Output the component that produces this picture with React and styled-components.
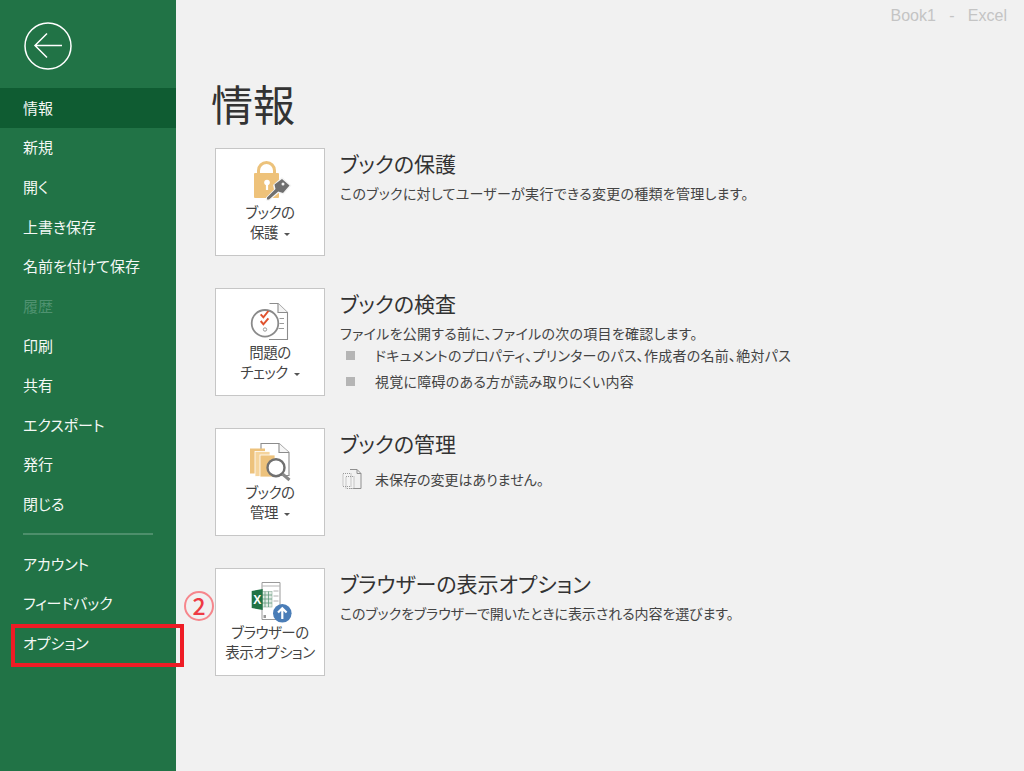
import React from 'react';
import styled, { createGlobalStyle } from 'styled-components';

const FONT = `"Noto Sans CJK JP", "Liberation Sans", sans-serif`;

const Global = createGlobalStyle`
  html, body { margin: 0; padding: 0; background: #f1f1f1; }
  body { font-family: ${FONT}; font-feature-settings: "palt"; }
`;

const Page = styled.div`
  position: relative;
  display: flex;
  width: 1024px;
  height: 771px;
  overflow: hidden;
  background: #f1f1f1;
`;
const Sidebar = styled.nav`
  width: 176px;
  flex: none;
  background: #217346;
  display: flex;
  flex-direction: column;
  padding-top: 22px;
  box-sizing: border-box;
`;
const BackButton = styled.div`
  height: 66px;
  padding-left: 24px;
  box-sizing: border-box;
`;
const NavItem = styled.div`
  height: 39.64px;
  flex: none;
  box-sizing: border-box;
  padding: 0 0 1px 23px;
  display: flex;
  align-items: center;
  font-size: 15px;
  letter-spacing: -0.05px;
  color: ${p => (p.$disabled ? '#4f9270' : '#f4f8f5')};
  background: ${p => (p.$active ? '#0f5c32' : 'transparent')};
`;
const Divider = styled.div`
  height: 2px;
  width: 130px;
  margin: 9px 0 9px 23px;
  background: #4d8f6b;
`;
const Main = styled.main`
  flex: 1;
  display: flex;
  flex-direction: column;
  padding: 0 0 0 39px;
  min-width: 0;
`;
const AppTitle = styled.div`
  align-self: flex-end;
  margin: 6px 17px 0 0;
  height: 20px;
  line-height: 20px;
  font-family: "Liberation Sans", sans-serif;
  font-size: 16px;
  color: #c4c4c4;
  white-space: pre;
`;
const PageTitle = styled.h1`
  margin: 46px 0 2px -4px;
  height: 62px;
  line-height: 62px;
  font-size: 42px;
  font-weight: 400;
  color: #333;
`;
const Sections = styled.div`
  display: flex;
  flex-direction: column;
  gap: 32px;
  margin-top: 12px;
`;
const Section = styled.section`
  display: flex;
  gap: 15px;
`;
const ActionButton = styled.div`
  width: 110px;
  height: 108px;
  box-sizing: border-box;
  flex: none;
  background: #fff;
  border: 1px solid #c6c6c6;
  display: flex;
  flex-direction: column;
  align-items: center;
  padding-top: 12px;
`;
const IconSlot = styled.div`
  height: 40px;
  width: 56px;
  flex: none;
`;
const ButtonLabel = styled.div`
  margin-top: 1px;
  font-size: 14.5px;
  letter-spacing: -0.5px;
  line-height: 20px;
  color: #444;
  text-align: center;
  white-space: nowrap;
`;
const Caret = styled.span`
  display: inline-block;
  width: 0;
  height: 0;
  margin-left: 6px;
  vertical-align: middle;
  border-left: 3px solid transparent;
  border-right: 3px solid transparent;
  border-top: 3px solid #555;
`;
const Info = styled.div`
  display: flex;
  flex-direction: column;
  min-width: 0;
`;
const SectionTitle = styled.h2`
  margin: 0;
  height: 34px;
  line-height: 30px;
  font-size: 21px;
  font-weight: 400;
  color: #333;
  white-space: nowrap;
`;
const Text = styled.p`
  margin: 0;
  height: 20px;
  line-height: 22px;
  font-size: 14px;
  letter-spacing: ${p => (p.$tight ? '-0.08px' : '0.27px')};
  color: #444;
  white-space: nowrap;
`;
const Bullet = styled.div`
  display: flex;
  align-items: center;
  height: 26px;
  font-size: 14px;
  letter-spacing: 0.25px;
  color: #444;
  white-space: nowrap;
  padding-left: 6px;
  &::before {
    content: '';
    width: 9px;
    height: 9px;
    background: #b5b5b5;
    margin-right: 20px;
    flex: none;
  }
`;
const StatusRow = styled.div`
  display: flex;
  align-items: center;
  gap: 12px;
  height: 34px;
  margin-left: 1px;
  font-size: 14px;
  color: #444;
`;
const RedBox = styled.div`
  position: absolute;
  left: 11px;
  top: 624px;
  width: 173px;
  height: 43px;
  box-sizing: border-box;
  border: 4px solid #ee1c25;
`;
const Annotation = styled.div`
  position: absolute;
  left: 184px;
  top: 591px;
  width: 30px;
  height: 30px;
  box-sizing: border-box;
  border: 2px solid #f6868c;
  border-radius: 50%;
  color: #ee3a44;
  font-size: 23px;
  font-weight: 500;
  line-height: 25px;
  text-align: center;
`;

const ArrowIcon = () => (
  <svg width="48" height="48" viewBox="0 0 48 48" fill="none" stroke="#fff">
    <circle cx="24" cy="24" r="23" strokeWidth="1.5" />
    <path d="M38 23.500H11M23 11.500L11 23.500L23 35.500" strokeWidth="1.5" />
  </svg>
);
const LockIcon = () => (
  <svg width="56" height="42" viewBox="0 0 56 42" fill="none">
    <path d="M16.500 13V9.500a8 8 0 0 1 16 0V13" stroke="#ecc27b" strokeWidth="3" />
    <rect x="12" y="12" width="25" height="25" rx="1" fill="#eec27a" />
    <circle cx="25" cy="21.500" r="2.800" fill="#fff" />
    <rect x="23.900" y="22" width="2.200" height="7" fill="#fff" />
    <path d="M40 16l9.500 8.500-8 9-5-1.500-9.500 8-3-.5v-3l8-8-1-4.500z" fill="#f4f4f4" />
    <path d="M40 18l7.500 6.500-6.500 7.500-4.800-1.500-9.200 8h-2v-2l8.500-8.500-1-4.500z" fill="#6f6f6f" />
    <circle cx="41" cy="23" r="1.500" fill="#f4f4f4" />
  </svg>
);
const CheckIcon = () => (
  <svg width="56" height="42" viewBox="0 0 56 42" fill="none">
    <path d="M27.500 2.500H36l9.500 9v27H27" stroke="#8c8c8c" strokeWidth="1.100" fill="#fff" />
    <path d="M36 2.500v9h9.500" stroke="#8c8c8c" strokeWidth="1.100" fill="#f4f4f4" />
    <path d="M37.500 17.500H42M37.500 22.500H42M36.500 27.500H42" stroke="#9a9a9a" strokeWidth="1" />
    <circle cx="23" cy="22.300" r="13.300" stroke="#8a8a8a" strokeWidth="1.800" fill="#fff" />
    <path d="M18.700 13.300l2.700 3 5-6.300M18.700 20l2.700 3.300 5-6" stroke="#e0522e" strokeWidth="2" />
    <circle cx="23" cy="28.500" r="1.700" stroke="#999" strokeWidth="1" />
  </svg>
);
const ManageIcon = () => (
  <svg width="56" height="42" viewBox="0 0 56 42" fill="none">
    <path d="M19 2.500h18l10 9v23H19z" stroke="#8c8c8c" strokeWidth="1.100" fill="#fff" />
    <path d="M37 2.500v9h10" stroke="#8c8c8c" strokeWidth="1.100" fill="#f6f6f6" />
    <rect x="8" y="7.500" width="15" height="25" fill="#edc27c" />
    <rect x="13" y="10.500" width="15" height="25" fill="#f5d49c" stroke="#fff" strokeWidth=".8" />
    <rect x="18" y="14" width="15" height="22" fill="#edc27c" stroke="#fff" strokeWidth=".8" />
    <circle cx="34" cy="26.700" r="8.500" fill="#fff" stroke="#707070" strokeWidth="2.400" />
    <path d="M40.500 33l7 6" stroke="#8a8a8a" strokeWidth="3" />
  </svg>
);
const BrowserIcon = () => (
  <svg width="56" height="42" viewBox="0 0 56 42" fill="none">
    <path d="M20 1.500h18v37H20z" stroke="#9a9a9a" strokeWidth="1" fill="#fff" />
    <path d="M20 5h18" stroke="#b5b5b5" />
    <path d="M31.500 10h5M31.500 15h5M31.500 20h5" stroke="#b0b0b0" />
    <rect x="21.500" y="34" width="2.500" height="3" fill="#999" />
    <rect x="20" y="10.500" width="10" height="15.500" fill="#e2ece5" stroke="#9bb8a6" strokeWidth=".7" />
    <path d="M23 10.500V26M26.500 10.500V26M20 14h10M20 18h10M20 22h10" stroke="#5f9a7c" strokeWidth=".8" />
    <path d="M9.700 10l11-2v21l-11-2z" fill="#217346" />
    <text x="15.200" y="23" fontFamily="Liberation Sans" fontSize="12" fontWeight="700" fill="#fff" textAnchor="middle">X</text>
    <circle cx="40.300" cy="32.300" r="9.300" fill="#4a7db7" />
    <path d="M40.300 38V27.500M36 31.500l4.300-4.300 4.300 4.300" stroke="#fff" strokeWidth="2.200" />
  </svg>
);
const SmallFilesIcon = () => (
  <svg width="22" height="22" viewBox="0 0 22 22" fill="none">
    <path d="M9 1.500h7l4 4v15H9" stroke="#8f8f8f" />
    <path d="M16 1.500v4h4" stroke="#8f8f8f" />
    <path d="M2 5.500h8v13H2zM5 8.500h8v12H5z" stroke="#9a9a9a" strokeDasharray="1 1" fill="#f4f4f4" />
  </svg>
);

const navTop = ['情報', '新規', '開く', '上書き保存', '名前を付けて保存', '履歴', '印刷', '共有', 'エクスポート', '発行', '閉じる'];
const navBottom = ['アカウント', 'フィードバック', 'オプション'];

export default function App() {
  return (
    <Page>
      <Global />
      <Sidebar>
        <BackButton><ArrowIcon /></BackButton>
        {navTop.map(t => (
          <NavItem key={t} $active={t === '情報'} $disabled={t === '履歴'}>{t}</NavItem>
        ))}
        <Divider />
        {navBottom.map(t => <NavItem key={t}>{t}</NavItem>)}
      </Sidebar>
      <Main>
        <AppTitle>Book1   -   Excel</AppTitle>
        <PageTitle>情報</PageTitle>
        <Sections>
          <Section>
            <ActionButton>
              <IconSlot><LockIcon /></IconSlot>
              <ButtonLabel>ブックの<br />保護<Caret /></ButtonLabel>
            </ActionButton>
            <Info>
              <SectionTitle>ブックの保護</SectionTitle>
              <Text>このブックに対してユーザーが実行できる変更の種類を管理します。</Text>
            </Info>
          </Section>
          <Section>
            <ActionButton>
              <IconSlot><CheckIcon /></IconSlot>
              <ButtonLabel>問題の<br />チェック<Caret /></ButtonLabel>
            </ActionButton>
            <Info>
              <SectionTitle>ブックの検査</SectionTitle>
              <Text>ファイルを公開する前に、ファイルの次の項目を確認します。</Text>
              <Bullet>ドキュメントのプロパティ、プリンターのパス、作成者の名前、絶対パス</Bullet>
              <Bullet>視覚に障碍のある方が読み取りにくい内容</Bullet>
            </Info>
          </Section>
          <Section>
            <ActionButton>
              <IconSlot><ManageIcon /></IconSlot>
              <ButtonLabel>ブックの<br />管理<Caret /></ButtonLabel>
            </ActionButton>
            <Info>
              <SectionTitle>ブックの管理</SectionTitle>
              <StatusRow><SmallFilesIcon />未保存の変更はありません。</StatusRow>
            </Info>
          </Section>
          <Section>
            <ActionButton>
              <IconSlot><BrowserIcon /></IconSlot>
              <ButtonLabel>ブラウザーの<br />表示オプション</ButtonLabel>
            </ActionButton>
            <Info>
              <SectionTitle>ブラウザーの表示オプション</SectionTitle>
              <Text $tight>このブックをブラウザーで開いたときに表示される内容を選びます。</Text>
            </Info>
          </Section>
        </Sections>
      </Main>
      <RedBox />
      <Annotation>2</Annotation>
    </Page>
  );
}
